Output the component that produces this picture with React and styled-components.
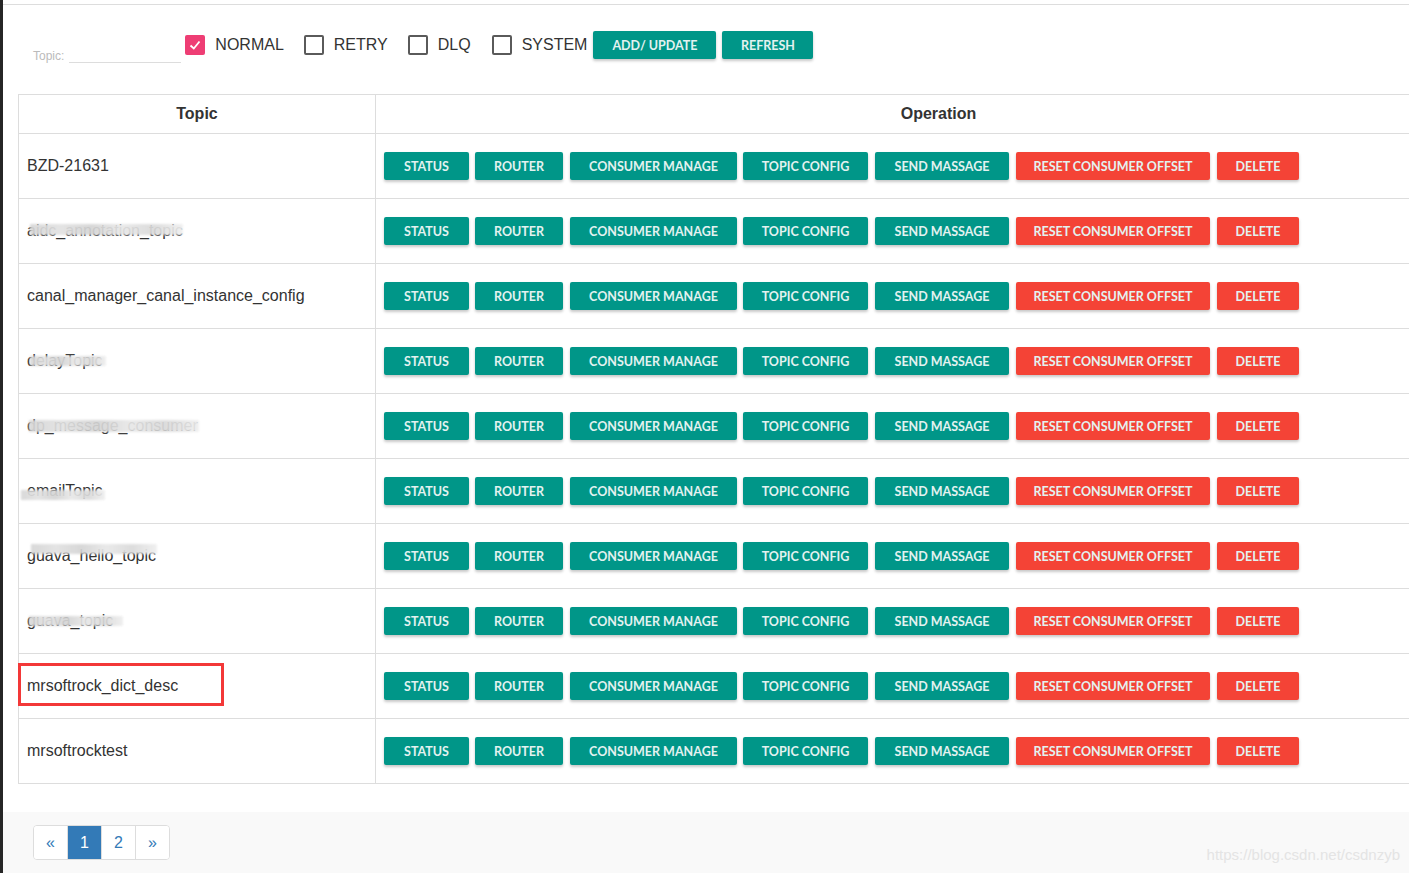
import React from 'react'
import styled, { createGlobalStyle } from 'styled-components'

const Global = createGlobalStyle`
  html, body { margin: 0; padding: 0; background: #fff; overflow: hidden; }
  body { font-family: "Liberation Sans", Arial, sans-serif; color: #333; }
`

const Page = styled.div`
  display: flex;
  width: 1409px;
  height: 873px;
  overflow: hidden;
`

const Strip = styled.div`
  width: 3px;
  flex: none;
  background: #262626;
`

const Main = styled.div`
  flex: 1;
  display: flex;
  flex-direction: column;
  min-width: 0;
  padding-top: 4px;
`

const Content = styled.div`
  border-top: 1px solid #ddd;
  background: #fff;
  padding-bottom: 28px;
`

const Toolbar = styled.div`
  display: flex;
  align-items: center;
  height: 28px;
  padding: 26px 0 0 30px;
`

const TopicField = styled.div`
  display: flex;
  align-items: flex-end;
  align-self: flex-end;
  margin-bottom: -4px;
  margin-right: 4px;
`

const FieldLabel = styled.span`
  font-size: 12px;
  color: #bbb;
  margin-right: 5px;
  line-height: 14px;
`

const FieldInput = styled.div`
  width: 112px;
  height: 18px;
  border-bottom: 1px solid #ddd;
`

const CheckItem = styled.label`
  display: flex;
  align-items: center;
  gap: 10px;
  margin-right: ${p => p.$gap}px;
  font-size: 16px;
  color: #333;
`

const Box = styled.span`
  width: 20px;
  height: 20px;
  box-sizing: border-box;
  border-radius: 2px;
  display: flex;
  align-items: center;
  justify-content: center;
  border: ${p => (p.$on ? 'none' : '2px solid #5a5a5a')};
  background: ${p => (p.$on ? '#ee3d74' : 'transparent')};
`

const Btn = styled.button`
  width: ${p => p.$w}px;
  height: 28px;
  margin-right: ${p => (p.$gap != null ? p.$gap : 6)}px;
  padding: 0;
  border: none;
  border-radius: 2px;
  background: ${p => (p.$danger ? '#f44336' : '#009688')};
  color: #e3f2f0;
  font-family: Lato, "Open Sans", sans-serif;
  font-weight: bold;
  font-size: 12.5px;
  text-transform: uppercase;
  box-shadow: 0 2px 3px rgba(0, 0, 0, 0.22);
  flex: none;
`

const TableWrap = styled.div`
  margin: 35px 0 0 15px;
`

const Table = styled.table`
  border-collapse: collapse;
  width: 1484px;
  table-layout: fixed;
  font-size: 16px;
  color: #333;
`

const Th = styled.th`
  height: 38px;
  border: 1px solid #ddd;
  font-weight: bold;
  text-align: center;
  padding: 0;
  width: ${p => (p.$w ? p.$w + 'px' : 'auto')};
`

const Td = styled.td`
  height: 64px;
  border: 1px solid #ddd;
  padding: 0 0 0 ${p => p.$pad}px;
  position: relative;
`

const Ops = styled.div`
  display: flex;
  align-items: center;
`

const Name = styled.span`
  position: relative;
  display: inline-block;
`

const Mask = styled.span`
  position: absolute;
  left: ${p => p.$l}px;
  top: ${p => p.$t}px;
  width: ${p => p.$w}px;
  height: ${p => p.$h}px;
  background: linear-gradient(90deg, #d6d6d6 0%, #e2e2e2 20%, #d4d4d4 40%, #e8e8e8 60%, #dadada 80%, #efefef 100%);
  filter: blur(1px);
  opacity: 0.92;
`

const Highlight = styled.div`
  position: absolute;
  left: -1px;
  top: 9px;
  width: 200px;
  height: 37px;
  border: 3px solid #f33838;
`

const Footer = styled.div`
  flex: 1;
  background: #f9f9f9;
  position: relative;
  padding: 13px 0 0 30px;
`

const Pager = styled.ul`
  display: inline-flex;
  list-style: none;
  margin: 0;
  padding: 0;
  border: 1px solid #ddd;
  border-radius: 4px;
  overflow: hidden;
  background: #fff;
`

const PageItem = styled.li`
  width: 33px;
  height: 33px;
  display: flex;
  align-items: center;
  justify-content: center;
  font-size: 16px;
  color: ${p => (p.$active ? '#fff' : '#337ab7')};
  background: ${p => (p.$active ? '#337ab7' : '#fff')};
  border-left: ${p => (p.$first ? 'none' : '1px solid #ddd')};
`

const Watermark = styled.div`
  position: absolute;
  right: 9px;
  bottom: 10px;
  font-size: 15px;
  color: #e4e4e4;
`

const ops = [
  { t: 'Status', w: 85, g: 6 },
  { t: 'Router', w: 88, g: 7 },
  { t: 'Consumer Manage', w: 167, g: 6 },
  { t: 'Topic Config', w: 125, g: 7 },
  { t: 'Send Massage', w: 134, g: 7 },
  { t: 'Reset Consumer Offset', w: 194, g: 7, danger: true },
  { t: 'Delete', w: 82, g: 0, danger: true },
]

const rows = [
  { name: 'BZD-21631' },
  { name: 'aidc_annotation_topic', mask: [3, 2, 153, 11] },
  { name: 'canal_manager_canal_instance_config' },
  { name: 'delayTopic', mask: [3, 4, 76, 10] },
  { name: 'dp_message_consumer', mask: [2, 3, 170, 12] },
  { name: 'emailTopic', mask: [-6, 8, 84, 10] },
  { name: 'guava_hello_topic', mask: [4, -3, 126, 10] },
  { name: 'guava_topic', mask: [2, 4, 94, 10] },
  { name: 'mrsoftrock_dict_desc', boxed: true },
  { name: 'mrsoftrocktest' },
]

const Check = () => (
  <svg width="14" height="14" viewBox="0 0 14 14">
    <polyline points="2.5,7.5 5.8,10.5 11.5,3.5" fill="none" stroke="#fff" strokeWidth="1.8" />
  </svg>
)

export default function App() {
  return (
    <>
      <Global />
      <Page>
        <Strip />
        <Main>
          <Content>
            <Toolbar>
              <TopicField>
                <FieldLabel>Topic:</FieldLabel>
                <FieldInput />
              </TopicField>
              <CheckItem $gap={20}>
                <Box $on><Check /></Box>NORMAL
              </CheckItem>
              <CheckItem $gap={20}>
                <Box />RETRY
              </CheckItem>
              <CheckItem $gap={21}>
                <Box />DLQ
              </CheckItem>
              <CheckItem $gap={6}>
                <Box />SYSTEM
              </CheckItem>
              <Btn $w={123}>Add/ Update</Btn>
              <Btn $w={91}>Refresh</Btn>
            </Toolbar>
            <TableWrap>
              <Table>
                <thead>
                  <tr>
                    <Th $w={356}>Topic</Th>
                    <Th>Operation</Th>
                  </tr>
                </thead>
                <tbody>
                  {rows.map(r => (
                    <tr key={r.name}>
                      <Td $pad={8}>
                        <Name>
                          {r.name}
                          {r.mask && (
                            <Mask $l={r.mask[0]} $t={r.mask[1]} $w={r.mask[2]} $h={r.mask[3]} />
                          )}
                        </Name>
                        {r.boxed && <Highlight />}
                      </Td>
                      <Td $pad={8}>
                        <Ops>
                          {ops.map(o => (
                            <Btn key={o.t} $w={o.w} $gap={o.g} $danger={o.danger}>{o.t}</Btn>
                          ))}
                        </Ops>
                      </Td>
                    </tr>
                  ))}
                </tbody>
              </Table>
            </TableWrap>
          </Content>
          <Footer>
            <Pager>
              <PageItem $first>«</PageItem>
              <PageItem $active>1</PageItem>
              <PageItem>2</PageItem>
              <PageItem>»</PageItem>
            </Pager>
            <Watermark>https://blog.csdn.net/csdnzyb</Watermark>
          </Footer>
        </Main>
      </Page>
    </>
  )
}
